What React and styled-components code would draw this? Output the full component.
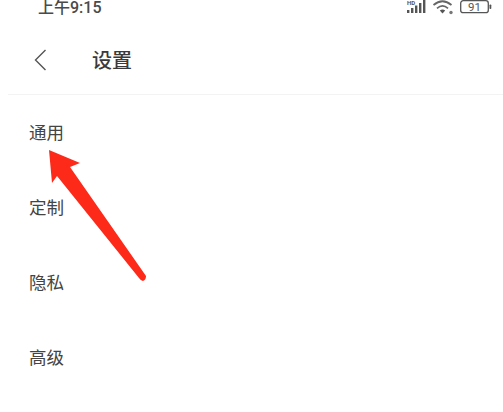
import React from 'react';
import styled, { createGlobalStyle } from 'styled-components';

const GlobalStyle = createGlobalStyle`
  html, body {
    margin: 0;
    padding: 0;
    background: #fff;
  }
`;

const Page = styled.div`
  position: relative;
  width: 503px;
  height: 412px;
  overflow: hidden;
  background: #fff;
  font-family: "Noto Sans CJK SC", "Noto Sans", sans-serif;
`;

const StatusBar = styled.div`
  display: flex;
  align-items: flex-start;
  height: 14px;
  padding-left: 38px;
`;

const Clock = styled.div`
  font-family: Roboto, "Noto Sans CJK SC", sans-serif;
  font-size: 16px;
  line-height: 15px;
  font-weight: 500;
  color: #4a4a4a;
  white-space: nowrap;
`;

const StatusIcons = styled.div`
  display: flex;
  align-items: flex-start;
  margin-left: auto;
  margin-right: 4px;
`;

const Header = styled.div`
  display: flex;
  align-items: center;
  height: 81px;
  margin-left: 8px;
  padding-left: 26px;
  box-sizing: border-box;
  border-bottom: 1px solid #f3f3f3;
`;

const BackIcon = styled.svg`
  width: 13px;
  height: 22px;
  margin-right: 45px;
  margin-top: 11px;
`;

const Title = styled.div`
  font-size: 20px;
  line-height: 24px;
  font-weight: 500;
  color: #3a3a3a;
  margin-top: 11px;
`;

const List = styled.div`
  display: flex;
  flex-direction: column;
  margin-top: -1px;
`;

const Row = styled.div`
  display: flex;
  align-items: center;
  height: 75px;
  padding-left: 29px;
  font-size: 17.5px;
  color: #444;
`;

const Arrow = styled.svg`
  position: absolute;
  left: 0;
  top: 0;
  width: 503px;
  height: 412px;
  pointer-events: none;
`;

const items = ['通用', '定制', '隐私', '高级'];

function App() {
  return (
    <Page>
      <GlobalStyle />
      <StatusBar>
        <Clock>上午9:15</Clock>
        <StatusIcons>
          <svg width="93" height="16" viewBox="0 0 93 16">
            <text x="1" y="4.5" fontSize="6" fontWeight="700" fontFamily="Roboto, sans-serif" fill="#555">HD</text>
            <g fill="#555">
              <rect x="1" y="10" width="2.4" height="3" />
              <rect x="5" y="8" width="2.4" height="5" />
              <rect x="9" y="5.5" width="2.4" height="7.5" />
              <rect x="13" y="3" width="2.4" height="10" />
              <rect x="17" y="0" width="2.4" height="13" />
            </g>
            <g fill="none" stroke="#666" strokeWidth="1.7">
              <path d="M27.5 5 Q36.5 -2.5 45.5 5" />
              <path d="M31 8.3 Q36.5 3.6 42 8.3" />
            </g>
            <path d="M33.8 10.6 Q36.5 8.6 39.2 10.6 L36.5 13.4 Z" fill="#555" />
            <circle cx="45" cy="12.5" r="1.7" fill="#777" />
            <rect x="54.7" y="0.7" width="27.6" height="12" rx="2.5" fill="none" stroke="#555" strokeWidth="1.3" />
            <text x="68.5" y="11.2" textAnchor="middle" fontSize="11.5" fontFamily="Roboto, sans-serif" fill="#555">91</text>
            <rect x="83.5" y="4.5" width="1.8" height="4.5" rx="0.8" fill="#555" />
          </svg>
        </StatusIcons>
      </StatusBar>
      <Header>
        <BackIcon viewBox="0 0 13 22">
          <path d="M11.5 1 L1.5 11 L11.5 21" fill="none" stroke="#555" strokeWidth="1.4" />
        </BackIcon>
        <Title>设置</Title>
      </Header>
      <List>
        {items.map((item) => (
          <Row key={item}>{item}</Row>
        ))}
      </List>
      <Arrow viewBox="0 0 503 412">
        <path
          d="M49 150 L80 163 L70 167 L146 276 Q146 280 143 281 Q141 281 139 278 L57 176 L52 183 Z"
          fill="#fd2a1a"
        />
      </Arrow>
    </Page>
  );
}

export default App;
